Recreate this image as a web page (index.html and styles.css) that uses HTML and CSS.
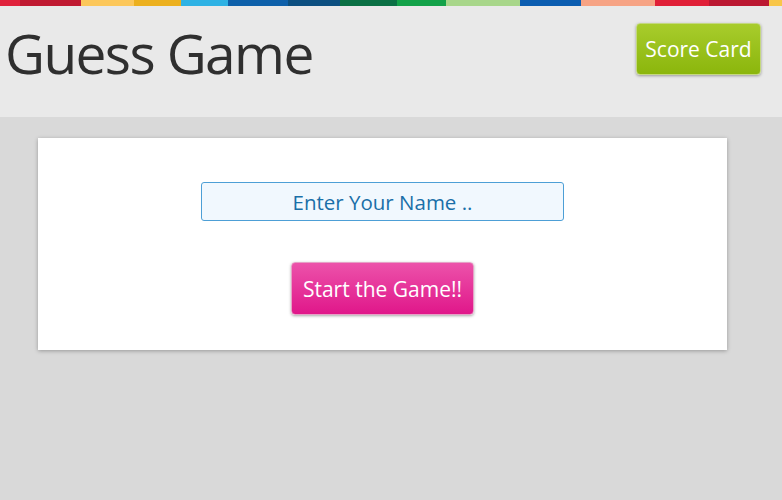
FILE: index.html
```html
<!DOCTYPE html>
<html>
<head>
<meta charset="utf-8">
<link rel="stylesheet" href="styles.css">
</head>
<body>
<div class="stripe">
  <span class="s1"></span><span class="s2"></span><span class="s3"></span><span class="s4"></span><span class="s5"></span><span class="s6"></span><span class="s7"></span><span class="s8"></span><span class="s9"></span><span class="s10"></span><span class="s11"></span><span class="s12"></span><span class="s13"></span><span class="s14"></span><span class="s15"></span>
</div>
<header class="header">
  <h1 class="title">Guess Game</h1>
  <button class="score-btn">Score Card</button>
</header>
<main class="card">
  <input class="name-input" type="text" placeholder="Enter Your Name ..">
  <button class="start-btn">Start the Game!!</button>
</main>
</body>
</html>
```
FILE: styles.css
```css
html, body {
  margin: 0;
  padding: 0;
}
body {
  background: #d9d9d9;
  font-family: "Open Sans", "DejaVu Sans", sans-serif;
  height: 500px;
}
.stripe {
  display: flex;
  height: 6px;
}
.stripe span { display: block; height: 6px; }
.s1 { width: 20px; background: #e0223c; }
.s2 { width: 61px; background: #c01a32; }
.s3 { width: 53px; background: #fcc75a; }
.s4 { width: 47px; background: #ecb01e; }
.s5 { width: 47px; background: #2eb2e4; }
.s6 { width: 60px; background: #0e60aa; }
.s7 { width: 52px; background: #0c4f80; }
.s8 { width: 57px; background: #0b7045; }
.s9 { width: 49px; background: #13a249; }
.s10 { width: 74px; background: #a8d68a; }
.s11 { width: 61px; background: #0b5db0; }
.s12 { width: 74px; background: #f6a384; }
.s13 { width: 54px; background: #e01f37; }
.s14 { width: 60px; background: #bb1831; }
.s15 { flex: 1; background: #f8c648; }

.header {
  background: #e9e9e9;
  height: 111px;
  display: flex;
  justify-content: space-between;
  align-items: flex-start;
  padding: 0 21px 0 5px;
}
.title {
  margin: 15px 0 0 0;
  font-size: 55px;
  font-weight: 400;
  color: #2f2f2f;
  letter-spacing: -1.6px;
  line-height: 64px;
}
.score-btn {
  margin-top: 17px;
  width: 125px;
  height: 52px;
  border: 1px solid #c4d880;
  border-radius: 4px;
  background: linear-gradient(#a8cc2c, #8bb60c);
  color: #fff;
  font-family: "Open Sans", "DejaVu Sans", sans-serif;
  font-size: 21px;
  box-shadow: 0 1px 3px rgba(0,0,0,0.35);
  padding: 0;
}
.card {
  background: #fff;
  margin: 21px 55px 0 38px;
  padding: 44px 0 35px;
  display: flex;
  flex-direction: column;
  align-items: center;
  gap: 41px;
  box-shadow: 0 1px 4px rgba(0,0,0,0.3);
}
.name-input {
  box-sizing: border-box;
  width: 363px;
  height: 39px;
  border: 1px solid #4d9fd6;
  border-radius: 3px;
  background: #f1f8fe;
  text-align: center;
  font-family: "Open Sans", "DejaVu Sans", sans-serif;
  font-size: 20.5px;
  color: #1a6fa8;
  outline: none;
}
.name-input::placeholder {
  color: #1a6fa8;
  opacity: 1;
}
.start-btn {
  box-sizing: border-box;
  width: 183px;
  height: 53px;
  border: 1px solid #e6a0c6;
  border-radius: 4px;
  background: linear-gradient(#ec52aa, #e0178a);
  color: #fff;
  font-family: "Open Sans", "DejaVu Sans", sans-serif;
  font-size: 21px;
  box-shadow: 0 1px 3px rgba(0,0,0,0.35);
  padding: 0;
}
```
